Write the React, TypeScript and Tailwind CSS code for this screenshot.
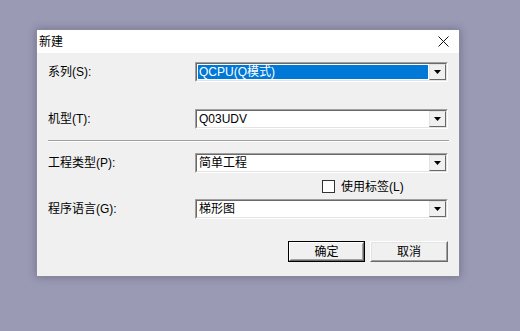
import React from "react";

const font = { fontFamily: '"Liberation Sans", "Noto Sans CJK SC", sans-serif' };

function Combo({ text, selected }: { text: string; selected?: boolean }) {
  return (
    <div className="w-[253px] h-[20px] border border-t-[#a0a0a0] border-l-[#a0a0a0] border-b-white border-r-white">
      <div className="h-full border border-t-[#696969] border-l-[#696969] border-b-[#e3e3e3] border-r-[#e3e3e3] bg-white flex items-stretch">
        <div className="flex-1 flex items-center pl-[1px] pr-[1px] py-[1px]">
          <div
            className={
              "h-full w-full flex items-center pl-[1px] text-[12px] leading-none " +
              (selected ? "bg-[#0078d7] text-white" : "text-black")
            }
          >
            {text}
          </div>
        </div>
        <div className="w-[17px] border border-t-[#e3e3e3] border-l-[#e3e3e3] border-b-[#696969] border-r-[#696969] bg-[#f0f0f0] flex items-center justify-center">
          <svg width="7" height="4" viewBox="0 0 7 4">
            <path d="M0 0 H7 L3.5 4 Z" fill="#000" />
          </svg>
        </div>
      </div>
    </div>
  );
}

function Row({ label, children }: { label: string; children: React.ReactNode }) {
  return (
    <div className="flex items-center h-[20px]">
      <div className="w-[158px] pl-[11px] text-[12px] text-black leading-none">{label}</div>
      {children}
    </div>
  );
}

export default function App() {
  return (
    <div className="w-[520px] h-[331px] bg-[#9b9ab5] overflow-hidden" style={font}>
      <div className="ml-[36px] pt-[29px]">
        <div className="w-[424px] h-[248px] border border-[#8a8a9a] shadow-[0_0_8px_rgba(40,40,70,0.35)] flex flex-col">
          <div className="h-[23px] bg-white flex items-center justify-between pl-[2px] pr-[10px]">
            <span className="text-[12px] text-black leading-none">新建</span>
            <svg width="11" height="11" viewBox="0 0 11 11">
              <path d="M0.5 0.5 L10.5 10.5 M10.5 0.5 L0.5 10.5" stroke="#111" strokeWidth="1" />
            </svg>
          </div>
          <div className="flex-1 bg-[#f0f0f0] flex flex-col pt-[9px]">
            <Row label="系列(S):">
              <Combo text="QCPU(Q模式)" selected />
            </Row>
            <div className="mt-[27px]">
              <Row label="机型(T):">
                <Combo text="Q03UDV" />
              </Row>
            </div>
            <div className="mt-[11px] ml-[11px] w-[401px] border-t border-t-[#a0a0a0] border-b border-b-white" />
            <div className="mt-[11px]">
              <Row label="工程类型(P):">
                <Combo text="简单工程" />
              </Row>
            </div>
            <div className="mt-[7px] h-[13px] flex items-center pl-[285px]">
              <div className="w-[13px] h-[13px] border border-[#333] bg-white" />
              <span className="ml-[6px] text-[12px] text-black leading-none">使用标签(L)</span>
            </div>
            <div className="mt-[6px]">
              <Row label="程序语言(G):">
                <Combo text="梯形图" />
              </Row>
            </div>
            <div className="mt-[22px] flex justify-end pr-[11px] gap-[5px]">
              <div className="w-[77px] h-[21px] border border-black">
                <div className="h-full border border-t-white border-l-white border-b-[#696969] border-r-[#696969] bg-[#f0f0f0]">
                  <div className="h-full border border-transparent border-b-[#a0a0a0] border-r-[#a0a0a0] flex items-center justify-center text-[12px] text-black leading-none">
                    确定
                  </div>
                </div>
              </div>
              <div className="w-[78px] h-[21px] border border-t-white border-l-white border-b-[#696969] border-r-[#696969] bg-[#f0f0f0]">
                <div className="h-full border border-t-[#e3e3e3] border-l-[#e3e3e3] border-b-[#a0a0a0] border-r-[#a0a0a0] flex items-center justify-center text-[12px] text-black leading-none">
                  取消
                </div>
              </div>
            </div>
          </div>
        </div>
      </div>
    </div>
  );
}
